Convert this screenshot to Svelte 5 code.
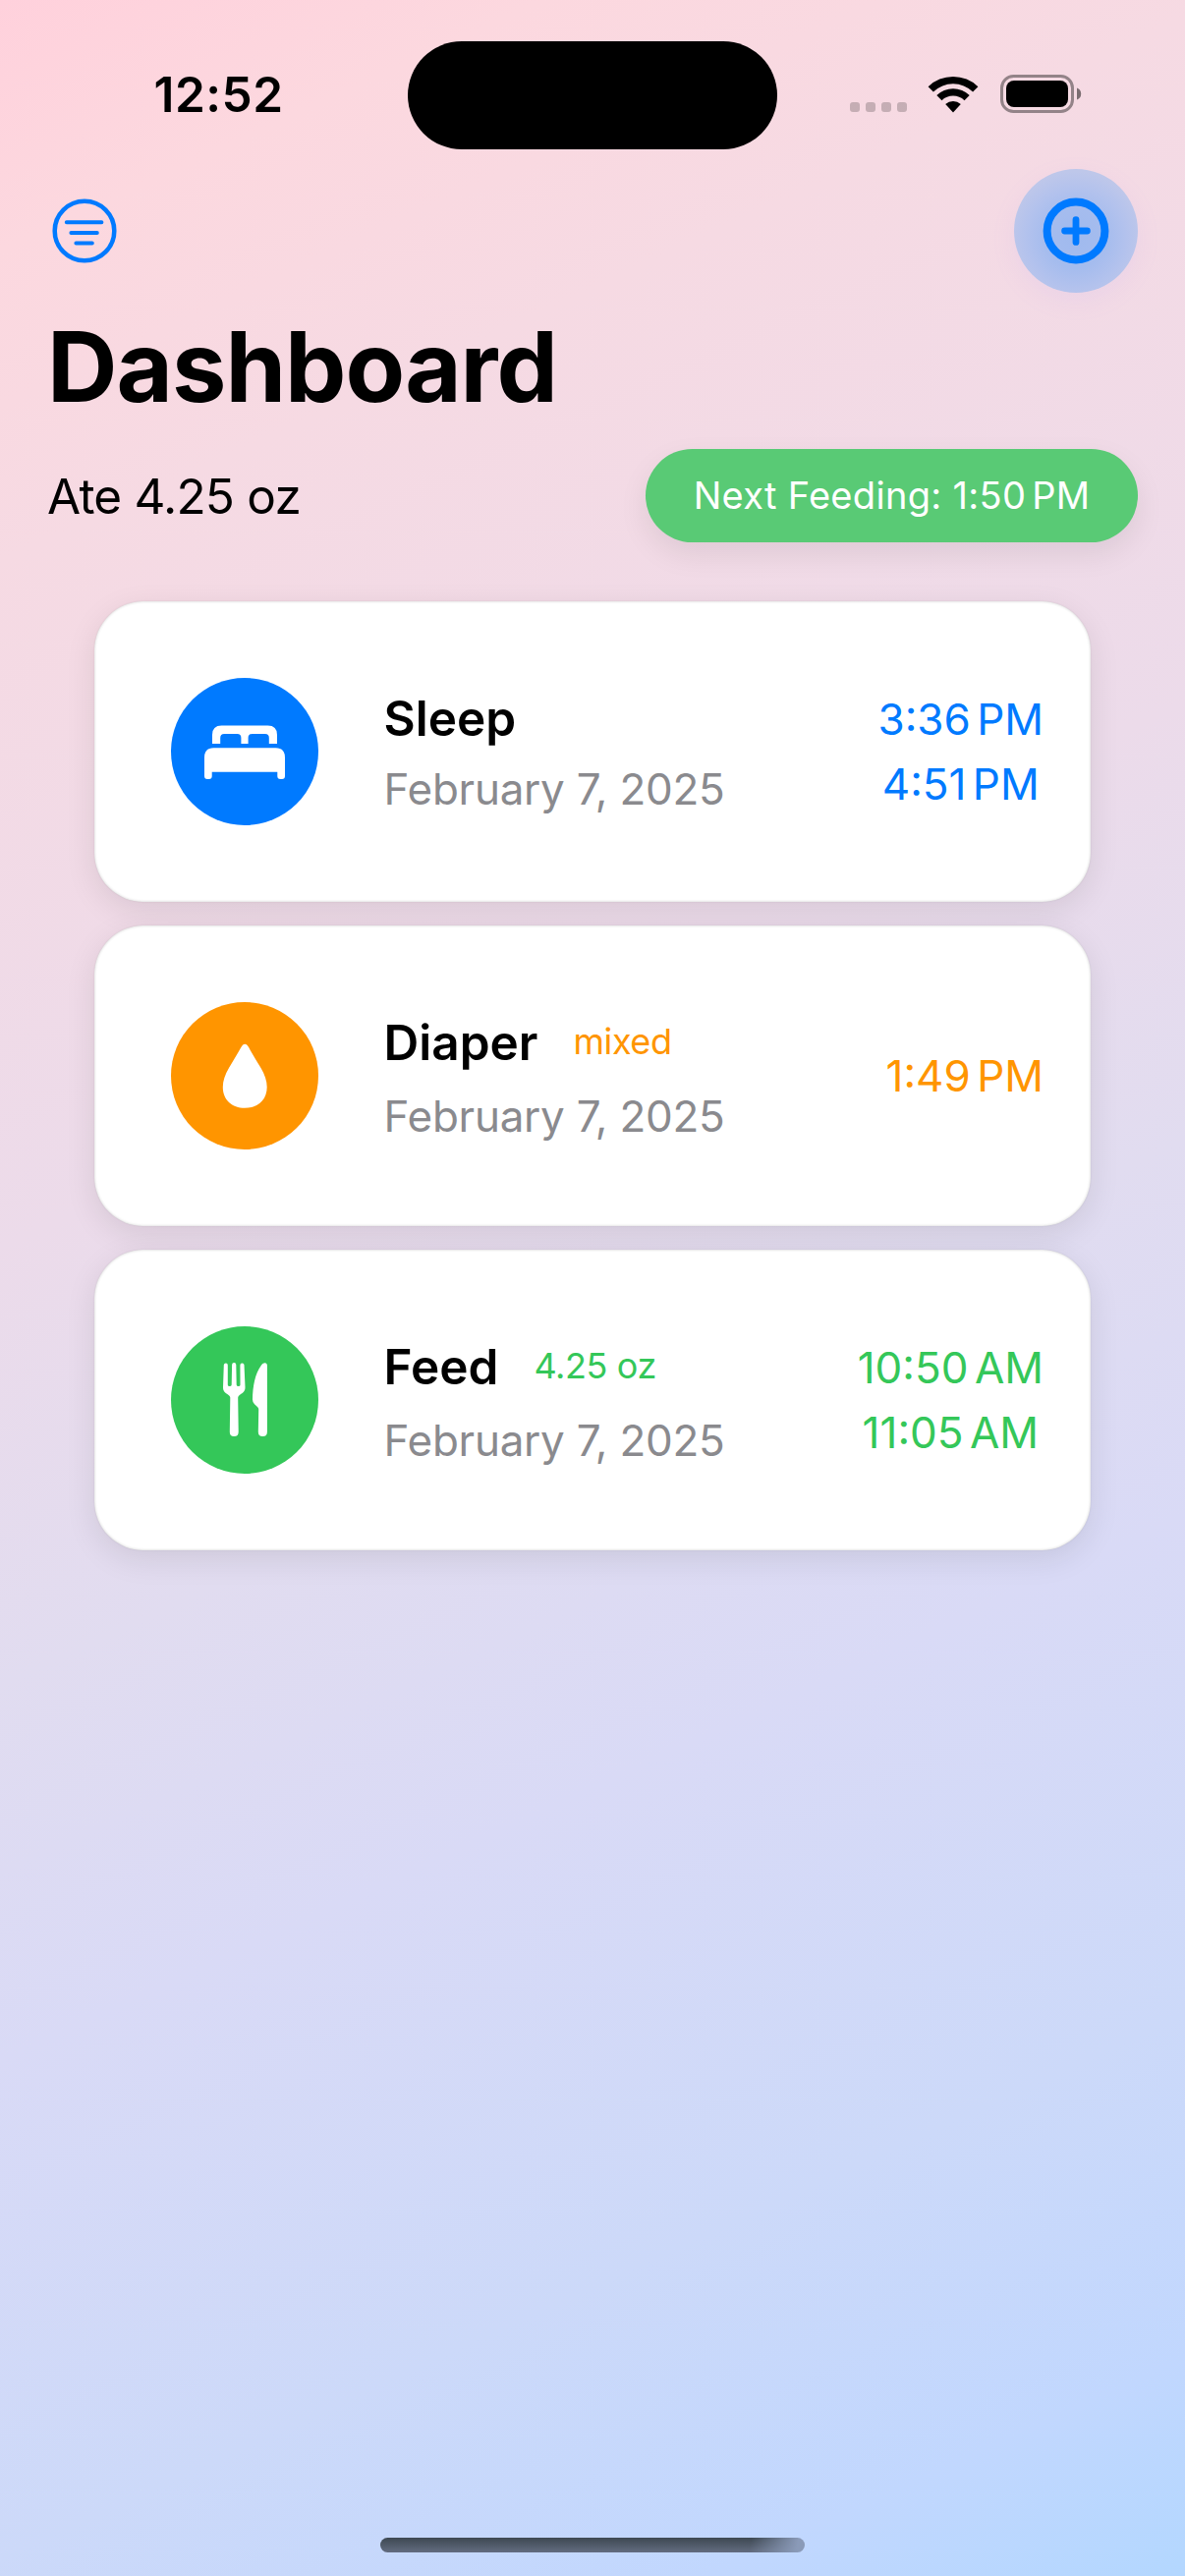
<script>
  const entries = [
    { kind: 'sleep', title: 'Sleep', note: '', date: 'February 7, 2025', times: ['3:36 PM', '4:51 PM'] },
    { kind: 'diaper', title: 'Diaper', note: 'mixed', date: 'February 7, 2025', times: ['1:49 PM'] },
    { kind: 'feed', title: 'Feed', note: '4.25 oz', date: 'February 7, 2025', times: ['10:50 AM', '11:05 AM'] }
  ];
</script>

<div class="screen">
  <header class="status">
    <div class="clock">12:52</div>
    <div class="island"></div>
    <div class="indicators">
      <div class="dots"><i></i><i></i><i></i><i></i></div>
      <svg class="wifi" width="52" height="38" viewBox="0 0 52 38">
        <path d="M0.6 11.2 A36.5 36.5 0 0 1 51.4 11.2 L46.1 16.4 A29 29 0 0 0 5.9 16.4 Z" />
        <path d="M9.3 20 A24 24 0 0 1 42.7 20 L37.5 25.2 A16.6 16.6 0 0 0 14.5 25.2 Z" />
        <path d="M18.2 29 A12 12 0 0 1 33.8 29 L26 37.4 Z" />
      </svg>
      <svg class="battery" width="84" height="39" viewBox="0 0 84 39">
        <rect class="shell" x="1.5" y="1.5" width="72" height="36" rx="12" />
        <rect x="6" y="6" width="63" height="27" rx="8" />
        <path class="nub" d="M78 13.5 a6.4 6.4 0 0 1 0 12 Z" />
      </svg>
    </div>
  </header>

  <nav class="toolbar">
    <svg class="filter" width="66" height="66" viewBox="0 0 66 66">
      <circle cx="33" cy="33" r="30.3" />
      <path d="M14.8 24.3 H50.4 M19.4 35 H45.8 M24.4 45.5 H40.8" />
    </svg>
    <div class="add">
      <svg width="68" height="68" viewBox="0 0 68 68">
        <circle cx="34" cy="34" r="29.4" />
        <path d="M34 22.6 V45.4 M22.6 34 H45.4" />
      </svg>
    </div>
  </nav>

  <h1>Dashboard</h1>

  <section class="summary">
    <div class="ate">Ate 4.25 oz</div>
    <div class="next">Next Feeding: <span>1:50 PM</span></div>
  </section>

  <main>
    {#each entries as entry}
      <article class={entry.kind}>
        <div class="badge">
          <svg width="150" height="150" viewBox="0 0 150 150">
            {#if entry.kind === 'sleep'}
              <path d="M42 67 V58 Q42 48.5 51.5 48.5 H98.5 Q108 48.5 108 58 V67 H99.8 V61 Q99.8 57 95.8 57 H82.6 Q78.6 57 78.6 61 V67 H71.4 V61 Q71.4 57 67.4 57 H54.2 Q50.2 57 50.2 61 V67 Z" />
              <path d="M34 81 Q34 71.3 43.5 71.3 H106.5 Q116 71.3 116 81 V100 Q116 103 113 103 H111.3 Q108.3 103 108.3 100 V95.7 H41.7 V100 Q41.7 103 38.7 103 H37 Q34 103 34 100 Z" />
            {:else if entry.kind === 'diaper'}
              <path d="M75.2 42.8 C77 42.8 78.2 44.4 79.3 46.3 C82.5 52.5 87.5 60 91.5 67 C95.5 74 97.7 80 97.7 86.5 C97.7 99.5 88.5 107.8 75.2 107.8 C62 107.8 52.8 99.5 52.8 86.5 C52.8 80 55 74 59 67 C63 60 68 52.5 71.2 46.3 C72.3 44.4 73.5 42.8 75.2 42.8 Z" />
            {:else}
              <path d="M53.8 39.2 Q54 37.4 55.9 37.4 Q57.8 37.4 57.8 39.4 V59.5 Q57.8 61 59.7 61 Q61.6 61 61.7 59.5 L62.1 39 Q62.2 37 64.2 37 Q66.2 37 66.3 39 L66.7 59.5 Q66.8 61 68.7 61 Q70.6 61 70.5 59.5 L70.4 39.4 Q70.4 37.4 72.4 37.4 Q74.4 37.4 74.5 39.2 L75.5 62 C75.6 66 73 68 70.4 69.4 Q68.2 70.6 68.2 72.5 L68.7 107.5 Q68.7 112 64.2 112 Q59.8 112 59.8 107.5 L60.3 72.5 Q60.3 70.6 58 69.4 C55.4 68 52.9 66 53 62 Z" />
              <path d="M97.9 39.7 V107.5 Q97.9 112 93.4 112 Q88.8 112 88.8 107.5 L89.2 84.5 Q89.2 83 88 82 L85 79.3 Q83 77.5 83 74.5 C83.2 61 85.5 48 92 39.5 C94.3 36.2 97.9 36.5 97.9 39.7 Z" />
            {/if}
          </svg>
        </div>
        <div class="info">
          <div class="heading">
            <h2>{entry.title}</h2>
            {#if entry.note}<span class="note">{entry.note}</span>{/if}
          </div>
          <div class="date">{entry.date}</div>
        </div>
        <div class="times">
          {#each entry.times as time}<div>{time}</div>{/each}
        </div>
      </article>
    {/each}
  </main>

  <footer><div class="home"></div></footer>
</div>

<style>
  :global(body) {
    margin: 0;
  }

  .screen {
    box-sizing: border-box;
    display: flex;
    flex-direction: column;
    width: 1206px;
    height: 2622px;
    overflow: hidden;
    background: linear-gradient(
      155.3deg,
      #ffd1dc 0%,
      #fcd8df 8%,
      #f6dae3 18%,
      #ecdbea 40%,
      #e1dcf0 54%,
      #d9daf6 66%,
      #ccd9f9 82%,
      #c1d7fe 93%,
      #b3d7ff 100%
    );
    font-family: Inter, "Liberation Sans", sans-serif;
    color: #000;
  }

  .status {
    display: grid;
    grid-template-columns: 415px 376px 415px;
    align-items: center;
    height: 110px;
    padding-top: 42px;
  }

  .clock {
    padding: 0 0 2px 30px;
    text-align: center;
    font-size: 49.5px;
    font-weight: 600;
    line-height: 60px;
    letter-spacing: 0.5px;
  }

  .island {
    height: 110px;
    border-radius: 55px;
    background: #000;
  }

  .indicators {
    display: flex;
    align-items: flex-end;
    padding: 0 0 3px 74px;
  }

  .dots {
    display: flex;
    gap: 6px;
    padding-bottom: 1px;
  }

  .dots i {
    width: 10px;
    height: 10px;
    border-radius: 3px;
    background: rgba(0, 0, 0, 0.2);
  }

  .wifi {
    margin-left: 21px;
  }

  .battery {
    margin-left: 22px;
  }

  .shell {
    fill: none;
    stroke: rgba(0, 0, 0, 0.4);
    stroke-width: 3;
  }

  .nub {
    fill: rgba(0, 0, 0, 0.5);
  }

  .toolbar {
    display: flex;
    justify-content: space-between;
    align-items: center;
    height: 126px;
    padding: 20px 48px 0 53.4px;
  }

  .toolbar svg {
    fill: none;
    stroke: #007aff;
    stroke-linecap: round;
  }

  .filter {
    stroke-width: 4.5;
  }

  .filter path {
    stroke-width: 4;
  }

  .add {
    display: flex;
    align-items: center;
    justify-content: center;
    width: 126px;
    height: 126px;
    border-radius: 50%;
    background: radial-gradient(circle 68px at 50% 56%, #a0baee 0%, #a5bcee 45%, #b3c2ed 75%, #bec7ea 100%);
    box-shadow: 0 8px 24px rgba(180, 150, 255, 0.1);
  }

  .add svg {
    stroke-width: 8;
  }

  .add path {
    stroke-width: 6.8;
  }

  h1 {
    margin: 15px 0 0 48px;
    font-size: 99px;
    font-weight: 700;
    line-height: 120px;
    letter-spacing: -1px;
  }

  .summary {
    display: flex;
    justify-content: space-between;
    align-items: center;
    height: 95px;
    margin-top: 24px;
    padding: 0 48px;
  }

  .ate {
    font-size: 49.5px;
    line-height: 60px;
    letter-spacing: -0.8px;
  }

  .next {
    box-sizing: border-box;
    width: 501px;
    height: 95px;
    border-radius: 48px;
    background: #59ca75;
    box-shadow: 0 12px 30px rgba(0, 0, 0, 0.08);
    color: #fff;
    text-align: center;
    font-size: 38px;
    line-height: 94px;
    letter-spacing: 0.3px;
    white-space: nowrap;
  }

  .next span {
    word-spacing: -5px;
  }

  main {
    display: flex;
    flex-direction: column;
    gap: 24px;
    margin: 60px 96px 0;
  }

  article {
    box-sizing: border-box;
    display: flex;
    align-items: center;
    height: 306px;
    padding-left: 78px;
    border-radius: 50px;
    background: #fff;
    box-shadow:
      inset 0 0 3px rgba(0, 0, 0, 0.2),
      0 0 2px rgba(0, 0, 0, 0.08),
      0 9px 32px rgba(0, 0, 0, 0.09);
  }

  .badge {
    width: 150px;
    height: 150px;
    border-radius: 50%;
    background: var(--tint);
  }

  .badge svg {
    display: block;
    fill: #fff;
  }

  .sleep {
    --tint: #007aff;
  }

  .diaper {
    --tint: #ff9500;
  }

  .feed {
    --tint: #34c759;
  }

  .info {
    flex: 1;
    align-self: flex-start;
    padding: 89px 0 0 66.5px;
  }

  .heading {
    display: flex;
    height: 60px;
  }

  h2 {
    margin: 0;
    font-size: 49.5px;
    font-weight: 600;
    line-height: 60px;
  }

  .note {
    margin-left: 36px;
    color: var(--tint);
    font-size: 36px;
    line-height: 58px;
    letter-spacing: -0.4px;
  }

  .date {
    margin-top: 18px;
    color: #8a8a8e;
    font-size: 44px;
    line-height: 54px;
    letter-spacing: -0.25px;
  }

  .sleep .date {
    margin-top: 15px;
  }

  .times {
    margin-right: 48px;
    color: var(--tint);
    text-align: center;
    font-size: 44px;
    line-height: 66px;
    white-space: nowrap;
    word-spacing: -6px;
  }

  footer {
    display: flex;
    justify-content: center;
    margin-top: auto;
    padding-bottom: 24px;
  }

  .home {
    width: 432px;
    height: 15px;
    border-radius: 8px;
    background:
      linear-gradient(100deg, transparent 87%, #8a9ab8 98%),
      linear-gradient(#3d4852, #636c80);
  }
</style>
